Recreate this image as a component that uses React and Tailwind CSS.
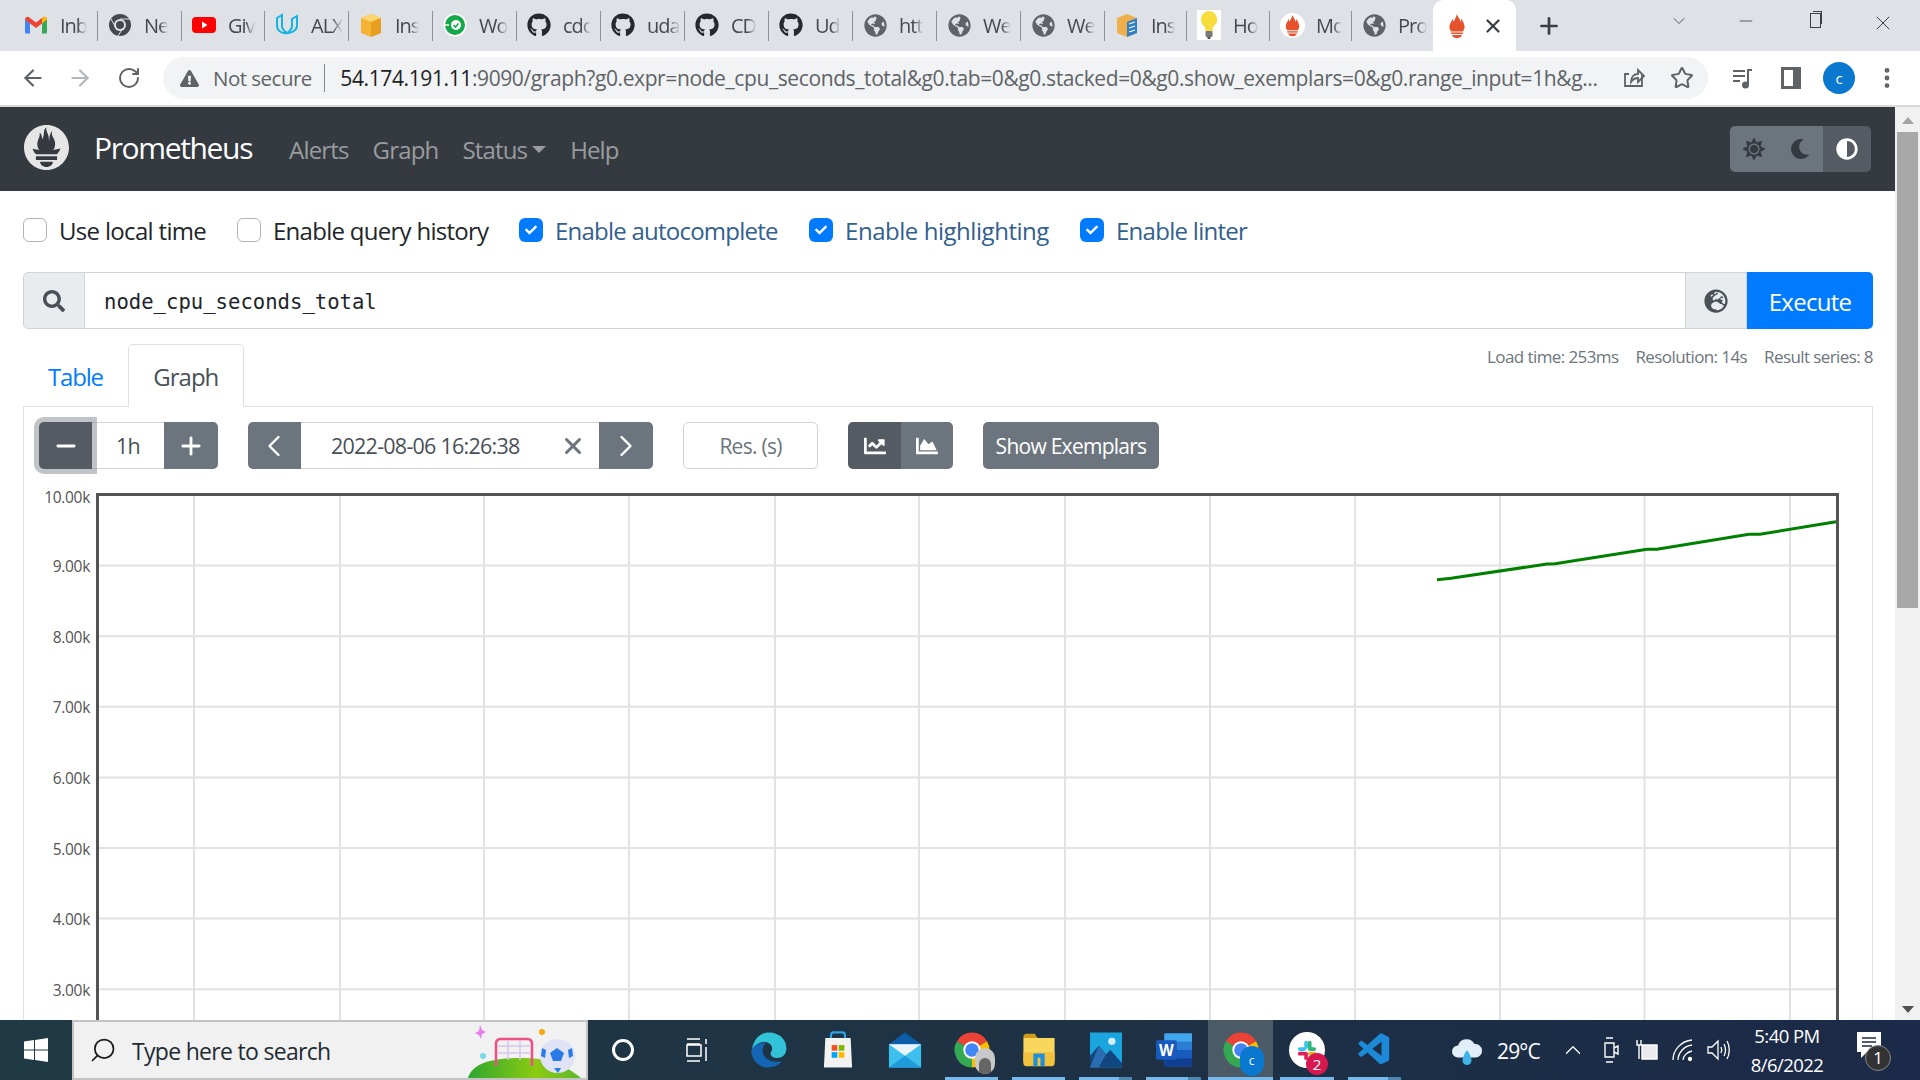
import {
  FaSearch, FaGlobeEurope, FaGlobeAmericas, FaChartLine, FaChartArea, FaSun, FaMoon, FaAdjust, FaGithub, FaCheck, FaExclamationTriangle,
} from 'react-icons/fa';
import { SiPrometheus } from 'react-icons/si';
import { VscVscode } from 'react-icons/vsc';
import { ArrowLeft, ArrowRight, RotateCw, Star, ChevronDown, ChevronUp, ChevronLeft, ChevronRight, Minus, X, Plus, EllipsisVertical, Search } from 'lucide-react';

const sans = "font-['Open_Sans',sans-serif]";

function Flame({ size = 24 }) {
  return (
    <svg width={size} height={size} viewBox="0 0 24 24">
      <path d="M12 1c.5 3 3 4 3 7 1-1 1-2 1-3 2 3 3 6 3 8 0 2-1 3-1.500 4h-11C6 16 5 15 5 13c0-3 2-5 3-8 0 1 .5 2 1 3 1-2 2-4 3-7z" fill="#e6522c" />
      <rect x="6.500" y="18" width="11" height="1.400" fill="#e6522c" />
      <path d="M7.500 20.400h9c0 1.500-2 2.800-4.500 2.800s-4.500-1.300-4.500-2.800z" fill="#e6522c" />
    </svg>
  );
}

function Gmail() {
  return (
    <svg width="24" height="24" viewBox="0 0 24 24">
      <path d="M1 6v13c0 1 .6 1.500 1.500 1.500H6V10z" fill="#4285f4" />
      <path d="M23 6v13c0 1-.6 1.500-1.500 1.500H18V10z" fill="#34a853" />
      <path d="M1 6.500C1 4 3.500 3 5 4.200L12 9.500l7-5.300C20.500 3 23 4 23 6.500L18 10.500 12 15 6 10.500z" fill="#ea4335" />
      <path d="M18 5.800L19 4.200C20.500 3 23 4 23 6.500L18 10.500z" fill="#fbbc04" />
    </svg>
  );
}

function DarkChrome() {
  return (
    <svg width="24" height="24" viewBox="0 0 24 24">
      <circle cx="12" cy="12" r="11" fill="#45494d" />
      <circle cx="12" cy="12" r="6" fill="#dee1e6" />
      <circle cx="12" cy="12" r="4" fill="#45494d" />
      <path d="M12 6h10M8 15L3 6M15 15l-5 8" stroke="#dee1e6" strokeWidth="1" />
    </svg>
  );
}

function Youtube() {
  return (
    <svg width="24" height="24" viewBox="0 0 24 24">
      <rect x="0" y="4" width="24" height="16" rx="4" fill="#ff0000" />
      <path d="M10 8.500l5.500 3.500-5.500 3.500z" fill="#fff" />
    </svg>
  );
}

function Udacity() {
  return (
    <svg width="26" height="26" viewBox="0 0 24 24" fill="none" stroke="#15b4e4" strokeWidth="2">
      <path d="M2 5l5-3v11c0 3 2 5 5 7-4 1-10-2-10-7z" />
      <path d="M22 3v10c0 4-5 7-10 7 3-2 5-4 5-7V6z" />
    </svg>
  );
}

function AmazonBox() {
  return (
    <svg width="24" height="26" viewBox="0 0 24 26">
      <path d="M2 6l10-4 10 4v15l-10 4-10-4z" fill="#f5b335" />
      <path d="M2 6l10 4 10-4-10-4z" fill="#fbd46d" />
      <path d="M12 10v15l10-4V6z" fill="#e89f1f" />
    </svg>
  );
}

function GreenCheck() {
  return (
    <svg width="24" height="24" viewBox="0 0 24 24">
      <circle cx="12" cy="12" r="11.500" fill="#fff" />
      <circle cx="12" cy="12" r="10" fill="#14a84a" />
      <circle cx="13" cy="12" r="5" fill="#fff" />
      <path d="M10.500 12l2 2 3-3.500" fill="none" stroke="#14a84a" strokeWidth="1.600" />
      <path d="M1 12h5" stroke="#fff" strokeWidth="1.500" />
    </svg>
  );
}

function BlueBox() {
  return (
    <svg width="24" height="26" viewBox="0 0 24 26">
      <path d="M2 6l10-4 10 4v15l-10 4-10-4z" fill="#eeb04a" />
      <path d="M12 10v15l10-4V6z" fill="#2f7fc4" />
      <path d="M14 12l6-2M14 16l6-2M14 20l6-2" stroke="#fff" strokeWidth="1.200" />
    </svg>
  );
}

function Bulb() {
  return (
    <svg width="24" height="30" viewBox="0 0 24 30">
      <rect width="24" height="30" fill="#fff" />
      <path d="M12 1a8.500 8.500 0 0 0-5 15c1 1 1.500 3 1.500 5h7c0-2 .5-4 1.500-5a8.500 8.500 0 0 0-5-15z" fill="#f7dc3d" />
      <rect x="8.500" y="21" width="7" height="6" rx="1" fill="#7a7a7a" />
      <rect x="10.500" y="27" width="3" height="2" fill="#555" />
    </svg>
  );
}

const github = <FaGithub className="text-[#24292e] text-[24px]" />;
const globe = <FaGlobeAmericas className="text-[#5f6368] text-[23px]" />;

const tabs = [
  { icon: <Gmail />, title: 'Inb', w: 'w-[84px]' },
  { icon: <DarkChrome />, title: 'Ne', w: 'w-[84px]' },
  { icon: <Youtube />, title: 'Giv', w: 'w-[83px]' },
  { icon: <Udacity />, title: 'ALX', w: 'w-[84px]' },
  { icon: <AmazonBox />, title: 'Ins', w: 'w-[84px]' },
  { icon: <GreenCheck />, title: 'Wo', w: 'w-[84px]' },
  { icon: github, title: 'cdc', w: 'w-[84px]' },
  { icon: github, title: 'uda', w: 'w-[84px]' },
  { icon: github, title: 'CD', w: 'w-[84px]' },
  { icon: github, title: 'Ud', w: 'w-[84px]' },
  { icon: globe, title: 'htt', w: 'w-[84px]' },
  { icon: globe, title: 'We', w: 'w-[84px]' },
  { icon: globe, title: 'We', w: 'w-[84px]' },
  { icon: <BlueBox />, title: 'Ins', w: 'w-[82px]' },
  { icon: <Bulb />, title: 'Ho', w: 'w-[83px]' },
  { icon: <span className="flex rounded-full bg-white p-[1px]"><Flame size={23} /></span>, title: 'Mc', w: 'w-[82px]' },
  { icon: globe, title: 'Pro', w: 'w-[82px]' },
];

function TabStrip() {
  return (
    <div className={`flex h-[51px] shrink-0 items-stretch bg-[#dee1e6] pl-[13px] ${sans}`}>
      {tabs.map((t, i) => (
        <div key={i} className={`${t.w} flex items-center pl-[11px] relative`}>
          <span className="flex w-[24px] h-[30px] mt-[-1px] items-center justify-center shrink-0">{t.icon}</span>
          <span className="ml-[12px] whitespace-nowrap text-[20px] tracking-[-0.05em] text-[#45494f] [mask-image:linear-gradient(to_right,black_65%,transparent)]">{t.title}</span>
          {i < tabs.length - 1 && <span className="absolute right-[-1px] top-[11px] h-[30px] w-[1.500px] bg-[#8d9197]" />}
        </div>
      ))}
      <div className="relative flex w-[83px] items-center rounded-t-[10px] bg-white pl-[11px]">
        <Flame size={26} />
        <X size={22} strokeWidth={2.500} className="ml-[12px] text-[#3c4043]" />
      </div>
      <div className="flex w-[66px] items-center justify-center">
        <Plus size={26} strokeWidth={2.500} className="text-[#3c4043]" />
      </div>
      <div className="flex flex-1 items-start text-[#3c4043]">
        <span className="flex w-[128px] justify-center pt-[11px] pl-[66px]"><ChevronDown size={20} strokeWidth={1} /></span>
        <span className="flex w-[72px] justify-center pt-[11px]"><Minus size={20} strokeWidth={1} /></span>
        <span className="relative ml-[-1px] flex w-[68px] justify-center pt-[13px]">
          <span className="block h-[15px] w-[11px] border border-[#3c4043] bg-[#dee1e6]" />
          <span className="absolute top-[11px] ml-[5px] h-[13px] w-[9px] border-t border-r border-[#3c4043]" />
        </span>
        <span className="flex w-[68px] justify-center pt-[11px]"><X size={24} strokeWidth={1} /></span>
      </div>
    </div>
  );
}

function Toolbar() {
  return (
    <div className={`flex h-[54px] shrink-0 items-center bg-white ${sans}`}>
      <div className="flex w-[163px] items-center pl-[20px]">
        <ArrowLeft size={26} strokeWidth={2} className="text-[#5f6368]" />
        <ArrowRight size={26} strokeWidth={2} className="ml-[21px] text-[#b4b7bb]" />
        <RotateCw size={24} strokeWidth={2} className="ml-[24px] text-[#5f6368]" />
      </div>
      <div className="flex h-[42px] w-[1545px] items-center rounded-full bg-[#f1f3f4] pl-[17px]">
        <FaExclamationTriangle className="text-[19px] text-[#5f6368]" />
        <span className="ml-[14px] text-[20.500px] tracking-[-0.025em] text-[#5f6368] whitespace-nowrap">Not secure</span>
        <span className="ml-[12px] h-[28px] w-[1.500px] bg-[#80868b]" />
        <span className="ml-[15px] mt-[2px] w-[1258px] overflow-hidden whitespace-nowrap text-[21px] tracking-[-0.0186em] text-[#5f6368]">
          <span className="text-[#202124]">54.174.191.11</span>:9090/graph?g0.expr=node_cpu_seconds_total&amp;g0.tab=0&amp;g0.stacked=0&amp;g0.show_exemplars=0&amp;g0.range_input=1h&amp;g...
        </span>
        <svg width="24" height="24" viewBox="0 0 24 24" fill="none" stroke="#5f6368" strokeWidth="1.800" className="ml-[24px]">
          <path d="M20 9v11H3V8h4" />
          <path d="M9 16c0-5 3-8 7-8V4l6 6-6 6v-4c-3 0-5 1-7 4z" />
        </svg>
        <Star size={24} strokeWidth={2} className="ml-[24px] text-[#5f6368]" />
      </div>
      <svg width="24" height="24" viewBox="0 0 24 24" fill="none" stroke="#5f6368" strokeWidth="2" className="ml-[23px]">
        <path d="M2 5h12M2 10h12M2 15h7M21 4h-4v15" />
        <circle cx="14.500" cy="19" r="2.500" fill="#5f6368" />
      </svg>
      <span className="ml-[26px] h-[22px] w-[20px] border-[3px] border-r-[8px] border-[#5f6368]" />
      <span className="ml-[22px] flex h-[32px] w-[32px] items-center justify-center rounded-full bg-[#0b78d0] text-[15px] text-white">c</span>
      <EllipsisVertical size={26} strokeWidth={2.500} className="ml-[19px] text-[#5f6368]" />
    </div>
  );
}

function NavBar() {
  return (
    <nav className={`flex h-[84px] items-center bg-[#343a40] pl-[24px] ${sans}`}>
      <SiPrometheus className="mt-[-4px] text-[45px] text-[#e6e6e6]" />
      <span className="ml-[25px] mt-[-4px] text-[30px] tracking-[-0.045em] text-white">Prometheus</span>
      <div className="ml-[37px] mt-[2px] flex items-center gap-[24px] text-[24px] tracking-[-0.035em] text-[#999c9f]">
        <span>Alerts</span>
        <span>Graph</span>
        <span className="flex items-center">
          Status
          <span className="ml-[5px] mt-[-1px] h-0 w-0 border-x-[7px] border-t-[7px] border-x-transparent border-t-[#999c9f]" />
        </span>
        <span>Help</span>
      </div>
      <div className="ml-auto mr-[24px] flex h-[46px] w-[141px] overflow-hidden rounded-[5px]">
        <span className="flex w-[47px] items-center justify-center bg-[#6c757d] text-[22px] text-[#343a40]"><FaSun /></span>
        <span className="flex w-[46px] items-center justify-center bg-[#6c757d] text-[20px] text-[#343a40]"><FaMoon /></span>
        <span className="flex w-[48px] items-center justify-center bg-[#545b62] text-[22px] text-white"><FaAdjust /></span>
      </div>
    </nav>
  );
}

function Check({ checked, label, labelClass }) {
  return (
    <label className={`flex items-center text-[24px] ${labelClass}`}>
      {checked ? (
        <span className="flex h-[24px] w-[24px] items-center justify-center rounded-[6px] bg-[#007bff] text-[12px] text-white"><FaCheck /></span>
      ) : (
        <span className="h-[24px] w-[24px] rounded-[6px] border border-[#adb5bd] bg-white" />
      )}
      <span className="ml-[12px] mt-[2px] leading-[24px] whitespace-nowrap">{label}</span>
    </label>
  );
}

const yTicks = ['10.00k', '9.00k', '8.00k', '7.00k', '6.00k', '5.00k', '4.00k', '3.00k'];
const xGrid = [194, 340, 484, 629, 775, 919, 1065, 1210, 1355, 1500, 1644.5, 1790];

function Chart() {
  return (
    <svg viewBox="24 488 1848 532" width="1848" height="532" className="mt-[19px] block">
      {xGrid.map((x) => (
        <line key={x} x1={x} x2={x} y1="494" y2="1020" stroke="#e2e2e2" strokeWidth="2" />
      ))}
      {yTicks.map((t, i) => (
        <g key={t}>
          <line x1="97" x2="1837" y1={495 + i * 70.6} y2={495 + i * 70.6} stroke="#e2e2e2" strokeWidth="2" />
          <text x="90" y={i === 0 ? 503 : 501.5 + i * 70.6} textAnchor="end" fontSize="15.500" fill="#545454" letterSpacing="-0.3" fontFamily="Open Sans, sans-serif">{t}</text>
        </g>
      ))}
      <path d="M97.500 1020V494.500H1837.500V1020" fill="none" stroke="#545454" strokeWidth="3" />
      <polyline
        points="1437,579.700 1451,578.300 1547,564 1555,563.800 1647,549.300 1657,549.200 1749,534.300 1760,534.200 1836,521.700"
        fill="none" stroke="#008000" strokeWidth="3"
      />
    </svg>
  );
}

function Controls() {
  const gray = 'flex h-[47px] items-center justify-center bg-[#6c757d] text-white';
  return (
    <div className={`flex h-[47px] items-stretch pl-[15px] ${sans}`}>
      <div className="flex">
        <span className="relative z-10 flex h-[47px] w-[53px] items-center justify-center rounded-l-[5px] bg-[#545b62] text-white shadow-[0_0_0_5px_rgba(130,138,145,0.5)]"><Minus size={28} strokeWidth={2.400} /></span>
        <span className="flex w-[72px] items-center justify-center border-y border-[#ced4da] pt-[2px] text-[21.500px] tracking-[-0.035em] text-[#495057]">1h</span>
        <span className={`${gray} w-[54px] rounded-r-[5px]`}><Plus size={28} strokeWidth={2.400} /></span>
      </div>
      <div className="ml-[30px] flex">
        <span className={`${gray} w-[53px] rounded-l-[5px] pr-[2px]`}><ChevronLeft size={36} strokeWidth={1.600} /></span>
        <span className="flex w-[298px] items-center border-y border-[#ced4da] pl-[30px] text-[21.500px] tracking-[-0.035em] text-[#495057]">
          <span className="pt-[2px]">2022-08-06 16:26:38</span>
          <X size={26} strokeWidth={2.800} className="ml-[40px] text-[#6c757d]" />
        </span>
        <span className={`${gray} w-[54px] rounded-r-[5px]`}><ChevronRight size={36} strokeWidth={1.600} /></span>
      </div>
      <span className="ml-[30px] flex w-[135px] items-center justify-center rounded-[5px] border border-[#ced4da] pt-[2px] text-[21px] tracking-[-0.035em] text-[#6c757d]">Res. (s)</span>
      <div className="ml-[30px] flex">
        <span className={`${gray} w-[53px] rounded-l-[5px] bg-[#545b62]! text-[22px]`}><FaChartLine /></span>
        <span className={`${gray} w-[52px] rounded-r-[5px] text-[22px]`}><FaChartArea /></span>
      </div>
      <span className={`${gray} ml-[30px] w-[176px] rounded-[5px] pt-[2px] text-[21px] tracking-[-0.035em]`}>Show Exemplars</span>
    </div>
  );
}

function Page() {
  return (
    <main className="min-w-0 flex-1 overflow-hidden bg-white">
      <NavBar />
      <div className={`pl-[23px] pr-[22px] ${sans}`}>
        <div className="mt-[27px] flex h-[24px] items-center text-[#212529]">
          <Check label="Use local time" labelClass="w-[214px] tracking-[-0.028em]" />
          <Check label="Enable query history" labelClass="w-[282px] tracking-[-0.03em]" />
          <Check checked label="Enable autocomplete" labelClass="w-[290px] tracking-[-0.032em] text-[#32608f]" />
          <Check checked label="Enable highlighting" labelClass="w-[271px] tracking-[-0.019em] text-[#32608f]" />
          <Check checked label="Enable linter" labelClass="tracking-[-0.03em] text-[#32608f]" />
        </div>
        <div className="mt-[30px] flex h-[57px]">
          <span className="flex w-[62px] items-center justify-center rounded-l-[5px] border border-[#ced4da] bg-[#e9ecef] text-[22px] text-[#495057]"><FaSearch /></span>
          <div className="flex flex-1 items-center border-y border-[#ced4da] pl-[19px] pt-[3px] font-['DejaVu_Sans_Mono',monospace] text-[20.600px] text-[#212529]">node_cpu_seconds_total</div>
          <span className="flex w-[62px] items-center justify-center border border-[#ced4da] bg-[#e9ecef] text-[24px] text-[#495057]"><FaGlobeEurope /></span>
          <span className="flex w-[126px] items-center justify-center rounded-r-[5px] bg-[#007bff] pt-[2px] text-[24px] tracking-[-0.03em] text-white">Execute</span>
        </div>
        <div className="mt-[15px] flex items-start justify-between">
          <div className="relative z-10 -mb-px flex h-[63px] items-stretch pl-[25px] pt-[2px] text-[24px]">
            <span className="flex items-center pr-[25px] tracking-[-0.05em] text-[#007bff]">Table</span>
            <span className="mt-[-2px] flex w-[116px] items-center justify-center rounded-t-[5px] border border-b-0 border-[#dee2e6] bg-white pt-[2px] tracking-[-0.04em] text-[#495057]">Graph</span>
          </div>
          <div className="flex gap-[17px] text-[17px] tracking-[-0.035em] text-[#6c757d]">
            <span>Load time: 253ms</span>
            <span>Resolution: 14s</span>
            <span>Result series: 8</span>
          </div>
        </div>
        <div className="border border-[#dee2e6] pt-[15px]">
          <Controls />
          <Chart />
        </div>
      </div>
    </main>
  );
}

function Scrollbar() {
  return (
    <div className="flex w-[25px] shrink-0 flex-col items-center bg-[#f1f1f1]">
      <span className="mt-[10px] h-0 w-0 border-x-[6px] border-b-[7px] border-x-transparent border-b-[#a3a3a3]" />
      <span className="mt-[8px] h-[476px] w-[21px] bg-[#a8a8a8]" />
      <span className="mt-auto mb-[7px] h-0 w-0 border-x-[6px] border-t-[7px] border-x-transparent border-t-[#505050]" />
    </div>
  );
}

function ChromeLogo({ size = 36 }) {
  return (
    <svg width={size} height={size} viewBox="0 0 24 24">
      <path d="M12 12L2.470 6.500A11 11 0 0 1 21.530 6.500Z" fill="#ea4335" />
      <path d="M12 12L21.530 6.500A11 11 0 0 1 12 23Z" fill="#fbbc04" />
      <path d="M12 12L12 23A11 11 0 0 1 2.470 6.500Z" fill="#34a853" />
      <circle cx="12" cy="12" r="5.500" fill="#fff" />
      <circle cx="12" cy="12" r="4.300" fill="#4285f4" />
    </svg>
  );
}

function TaskIcon({ children, w = 'w-[67px]', running, stacked, active }) {
  return (
    <div className={`relative flex h-full shrink-0 items-center justify-center ${w} ${active ? 'bg-[#4a5a66]' : ''}`}>
      {children}
      {running && (
        <span className={`absolute bottom-0 flex h-[3px] justify-end bg-[#76b9ed] ${active ? 'inset-x-0' : 'inset-x-[7px]'}`}>
          {stacked && <span className="block h-full w-[13px] bg-[#4f86b0]" />}
        </span>
      )}
    </div>
  );
}

function Taskbar() {
  return (
    <div className={`flex h-[60px] shrink-0 items-stretch bg-gradient-to-r from-[#1f3a45] via-[#1e3244] to-[#1b2a48] text-white ${sans}`}>
      <div className="flex w-[72px] items-center justify-center">
        <svg width="24" height="24" viewBox="0 0 24 24" fill="#fff">
          <path d="M0 3.500l10-1.400v9.400H0zM11 2l13-2v11.500H11zM0 12.500h10v9.400L0 20.500zM11 12.500h13V24l-13-2z" />
        </svg>
      </div>
      <div className="flex w-[516px] items-center overflow-hidden border-2 border-[#c4c4c4] bg-[#f1f1f1]">
        <Search size={28} strokeWidth={1.500} className="ml-[15px] -scale-x-100 text-[#1b1b1b]" />
        <span className="ml-[15px] mt-[2px] text-[23px] tracking-[-0.03em] text-[#1f2b33] whitespace-nowrap">Type here to search</span>
        <svg width="120" height="56" viewBox="0 0 120 56" className="ml-auto">
          <defs>
            <linearGradient id="hill" x1="0" x2="1" y1="0" y2="0">
              <stop offset="0" stopColor="#2fa62f" />
              <stop offset="0.6" stopColor="#8ccb12" />
              <stop offset="1" stopColor="#5cb82a" />
            </linearGradient>
          </defs>
          <path d="M2 56C6 42 24 36 55 36 85 36 100 44 115 56Z" fill="url(#hill)" />
          <path d="M30 44V21c0-2 2-4 4-4h28c2 0 4 2 4 4v23" fill="none" stroke="#ee4f82" strokeWidth="2.500" />
          <path d="M31 24h34M31 31h34M42 18v20M54 18v20" stroke="#d9c6e6" strokeWidth="1.500" />
          <ellipse cx="91.500" cy="34" rx="17.500" ry="17" fill="#dfe3f5" />
          <path d="M91 26l7 5-3 8h-8l-3-8zM76 26l4 2-1 8-4-2zM106 26l-4 2 1 8 4-2zM88 46h7l-3 5z" fill="#2a7be8" />
          <circle cx="76" cy="10" r="3" fill="#f7a70a" />
          <circle cx="17" cy="34" r="3" fill="#75dbe8" />
          <path d="M14 3l2 5 4 2-4 2-1 5-2-4-4-2 4-2z" fill="#e57ef0" />
        </svg>
      </div>
      <TaskIcon w="w-[70px]">
        <span className="block h-[22px] w-[22px] rounded-full border-[3px] border-white" />
      </TaskIcon>
      <TaskIcon w="w-[75px]">
        <svg width="26" height="24" viewBox="0 0 26 24" fill="none" stroke="#fff" strokeWidth="1.500">
          <path d="M4 1h13M4 6h13M1 6h0M4 7h14v11H4zM4 23h13M23 1v5M23 9v14M1 7v0" />
        </svg>
      </TaskIcon>
      <TaskIcon w="w-[71px]">
        <svg width="38" height="38" viewBox="0 0 24 24">
          <path d="M12 1c6 0 11 4 11 10 0 4-3 6-6 6-2 0-4-1-4-3 0-1 1-1.500 1-3 0-2-2-4-5-4-4 0-8 3-8 8C1 7 5 1 12 1z" fill="#33c3d8" />
          <path d="M1 13c0 6 5 10 10 10 4 0 7-1 9-4-1 .5-2 .5-3 .5-5 0-9-3-9-7 0-3 1-4 2-5-5 0-9 2-9 5.500z" fill="#1466b4" />
        </svg>
      </TaskIcon>
      <TaskIcon>
        <svg width="34" height="38" viewBox="0 0 24 27">
          <path d="M7 5V3c0-2 1-2 2-2h6c1 0 2 0 2 2v2" fill="none" stroke="#2aa4e8" strokeWidth="1.500" />
          <path d="M3 5h18l1 21H2z" fill="#f2f2f2" />
          <rect x="7.500" y="10" width="4" height="4" fill="#f25022" />
          <rect x="12.500" y="10" width="4" height="4" fill="#7fba00" />
          <rect x="7.500" y="15" width="4" height="4" fill="#00a4ef" />
          <rect x="12.500" y="15" width="4" height="4" fill="#ffb900" />
        </svg>
      </TaskIcon>
      <TaskIcon>
        <svg width="36" height="38" viewBox="0 0 24 26">
          <path d="M12 1l11 8H1z" fill="#0a5ea8" />
          <path d="M1 9h22v16H1z" fill="#3ec0ee" />
          <path d="M1 9h22l-11 8z" fill="#e8f4fb" />
          <path d="M1 25l11-8 11 8z" fill="#1f9bdc" />
        </svg>
      </TaskIcon>
      <TaskIcon running>
        <div className="relative">
          <ChromeLogo size={38} />
          <span className="absolute -right-[4px] top-[17px] flex h-[26px] w-[20px] items-end justify-center overflow-hidden rounded-full bg-[#c8c8c8]">
            <span className="block h-[16px] w-[12px] rounded-t-full bg-[#666]" />
          </span>
        </div>
      </TaskIcon>
      <TaskIcon running>
        <svg width="34" height="36" viewBox="0 0 24 25">
          <path d="M1 3c0-1 1-2 2-2h6l2 3H1z" fill="#d19c1e" />
          <path d="M1 4h22v17H1z" fill="#f9d65c" />
          <path d="M1 14h22v8c0 1-1 2-2 2H3c-1 0-2-1-2-2z" fill="#f2c23e" />
          <path d="M8 24v-9h8v9h-3v-6h-2v6z" fill="#1f8fd8" />
        </svg>
      </TaskIcon>
      <TaskIcon running stacked>
        <svg width="32" height="38" viewBox="0 0 22 26">
          <path d="M0 1h22v24H0z" fill="#1ba5de" />
          <circle cx="15" cy="7" r="2.500" fill="#d5eefb" />
          <path d="M0 25V17l6-7 5 6 3-3 8 9v3z" fill="#12467e" />
          <path d="M6 10l5 6-5 9H0z" fill="#2b6db0" />
        </svg>
      </TaskIcon>
      <TaskIcon running stacked w="w-[69px]">
        <svg width="36" height="34" viewBox="0 0 26 24">
          <rect x="6" y="0" width="20" height="24" rx="1.500" fill="#2b7cd3" />
          <rect x="6" y="0" width="20" height="6" fill="#41a5ee" />
          <rect x="6" y="12" width="20" height="6" fill="#185abd" />
          <rect x="6" y="18" width="20" height="6" fill="#103f91" />
          <rect x="0" y="5" width="15" height="14" rx="1" fill="#185abd" />
          <text x="7.500" y="16" textAnchor="middle" fontSize="11" fontWeight="700" fill="#fff" fontFamily="Open Sans, sans-serif">W</text>
        </svg>
      </TaskIcon>
      <TaskIcon active running w="w-[65px]">
        <div className="relative">
          <ChromeLogo size={38} />
          <span className="absolute -right-[4px] top-[15px] flex h-[30px] w-[24px] items-center justify-center rounded-full bg-[#0b78d0] text-[12px] text-white">c</span>
        </div>
      </TaskIcon>
      <TaskIcon running w="w-[68px]">
        <div className="relative flex h-[36px] w-[36px] items-center justify-center rounded-full bg-white">
          <svg width="22" height="22" viewBox="0 0 24 24">
            <rect x="9" y="2" width="4" height="9" rx="2" fill="#36c5f0" />
            <rect x="2" y="9" width="9" height="4" rx="2" fill="#36c5f0" />
            <rect x="13" y="2" width="4" height="9" rx="2" fill="#2eb67d" />
            <rect x="13" y="9" width="9" height="4" rx="2" fill="#2eb67d" />
            <rect x="2" y="14" width="9" height="4" rx="2" fill="#e01e5a" />
            <rect x="9" y="14" width="4" height="9" rx="2" fill="#e01e5a" />
            <rect x="13" y="14" width="9" height="4" rx="2" fill="#ecb22e" />
          </svg>
          <span className="absolute -right-[3px] bottom-[-7px] flex h-[22px] w-[22px] items-center justify-center rounded-full bg-[#d8194f] text-[15px] text-white">2</span>
        </div>
      </TaskIcon>
      <TaskIcon running stacked>
        <VscVscode className="text-[38px] text-[#1c8ad6]" />
      </TaskIcon>
      <div className="ml-[35px] flex items-center">
        <span className="flex w-[48px] justify-center">
          <svg width="36" height="36" viewBox="0 0 24 24">
            <path d="M6 17a4 4 0 0 1 0-8 6 6 0 0 1 11-1 4.500 4.500 0 0 1 1 9z" fill="#e2eef8" />
            <path d="M12 12c2 3 3 5 3 7a3 3 0 0 1-6 0c0-2 1-4 3-7z" fill="#3fb3e8" />
          </svg>
        </span>
        <span className="mt-[3px] w-[63px] pl-[6px] text-[21px] tracking-[-0.04em]">29°C</span>
        <span className="flex w-[38px] justify-center"><ChevronUp size={26} strokeWidth={1.200} /></span>
        <span className="flex w-[37px] justify-center">
          <svg width="20" height="28" viewBox="0 0 20 28" fill="none" stroke="#fff" strokeWidth="1.400">
            <path d="M4 7h9v14H4zM13 12l4-2v8l-4-2M5 2h7M5 26h7" />
          </svg>
        </span>
        <span className="flex w-[35px] justify-center">
          <svg width="24" height="24" viewBox="0 0 24 24" fill="none" stroke="#fff" strokeWidth="1.400">
            <path d="M7 7h15v14H7z" fill="#fff" fillOpacity="0.900" />
            <path d="M2 2v5h4V2M4 7v14" />
          </svg>
        </span>
        <span className="flex w-[37px] justify-center">
          <svg width="24" height="24" viewBox="0 0 24 24" fill="none" stroke="#fff" strokeWidth="1.300">
            <path d="M2 22C2 12 10 3 21 2M7 22c0-7 6-14 14-15M12 22c0-4 4-8 9-9" />
            <circle cx="19" cy="21" r="1.500" fill="#fff" />
          </svg>
        </span>
        <span className="flex w-[33px] justify-center">
          <svg width="24" height="24" viewBox="0 0 24 24" fill="none" stroke="#fff" strokeWidth="1.300">
            <path d="M2 9h4l6-6v18l-6-6H2zM15 9c1 2 1 4 0 6M18 6c2 4 2 8 0 12M21 3c3 5 3 13 0 18" />
          </svg>
        </span>
        <span className="flex w-[106px] flex-col items-center text-[18.500px] leading-[29px] tracking-[-0.03em]">
          <span>5:40 PM</span>
          <span>8/6/2022</span>
        </span>
        <span className="relative flex w-[58px] justify-center">
          <svg width="26" height="30" viewBox="0 0 26 30" fill="#fff" className="mb-[8px]">
            <path d="M1 1h24v20h-14l-6 6v-6H1z" />
            <path d="M6 7h14M6 11h14M6 15h10" stroke="#1b2a48" strokeWidth="1.500" />
          </svg>
          <span className="absolute left-[25px] top-[14px] flex h-[26px] w-[26px] items-center justify-center rounded-full border border-[#888] bg-[#333] text-[17px]">1</span>
        </span>
      </div>
    </div>
  );
}

export default function App() {
  return (
    <div className="flex h-[1080px] w-[1920px] flex-col overflow-hidden bg-white">
      <TabStrip />
      <Toolbar />
      <div className="h-[2px] shrink-0 bg-[#d9d9d9]" />
      <div className="flex min-h-0 flex-1">
        <Page />
        <Scrollbar />
      </div>
      <Taskbar />
    </div>
  );
}
